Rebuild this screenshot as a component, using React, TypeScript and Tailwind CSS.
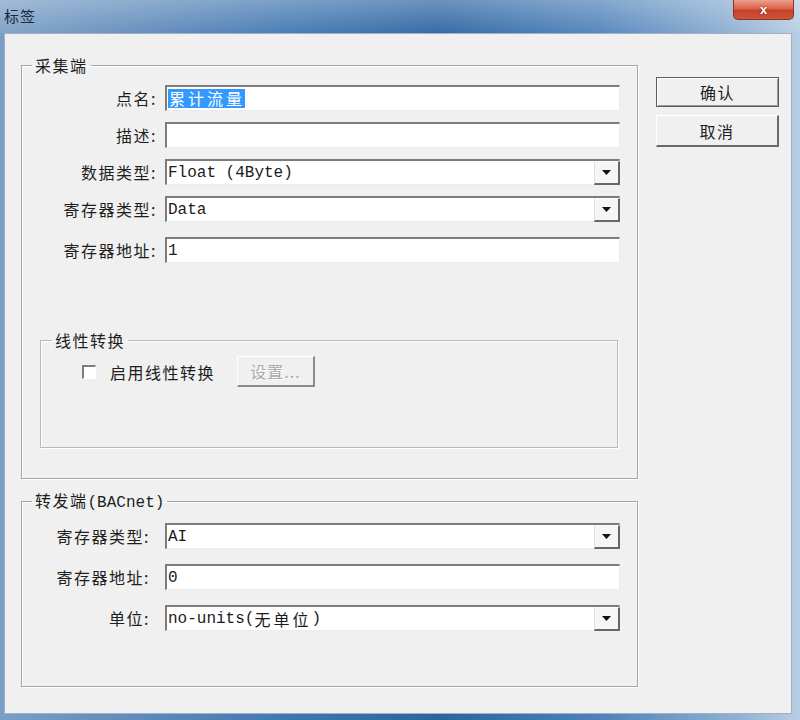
import React from "react";

const CJK = "font-['Noto_Sans_CJK_SC','Liberation_Sans',sans-serif]";
const MONO = "font-['Liberation_Mono','Noto_Sans_CJK_SC',monospace]";

function Arrow() {
  return (
    <svg width="9" height="5" viewBox="0 0 9 5">
      <polygon points="0,0 9,0 4.5,5" fill="#111" />
    </svg>
  );
}

function Field({ children, combo }: { children?: React.ReactNode; combo?: boolean }) {
  return (
    <div className="flex w-[455px] h-[26px] bg-white border-t-2 border-l-2 border-t-[#7c7c7c] border-l-[#7c7c7c] border-b border-b-[#ececec] border-r border-r-[#ececec]">
      <div className={`flex-1 flex items-center pl-[1px] text-[16px] leading-[20px] text-[#1b1b1b] whitespace-nowrap overflow-hidden ${MONO}`}>
        {children}
      </div>
      {combo && (
        <div className="w-[26px] h-[24px] -mb-[1px] -mr-[1px] bg-[#f6f6f6] border-t border-l border-t-white border-l-[#e0e0e0] border-b-2 border-r-2 border-b-[#676767] border-r-[#676767] flex items-center justify-center">
          <Arrow />
        </div>
      )}
    </div>
  );
}

function Row({ label, labelW, gap, children }: { label: string; labelW: string; gap: string; children: React.ReactNode }) {
  return (
    <div className="flex items-center">
      <div className={`${labelW} text-right text-[16px] leading-[20px] tracking-[1.5px] text-[#1e1e1e] ${CJK}`}>{label}</div>
      <div className={gap}>{children}</div>
    </div>
  );
}

export default function App() {
  return (
    <div className="w-[800px] h-[720px] flex flex-col overflow-hidden bg-[linear-gradient(90deg,#7a9fc6_0%,#6890bd_12%,#4278b1_35%,#2c63a1_55%,#4f82ba_75%,#8fb0d2_92%,#b7cde4_100%)]">
      {/* title bar */}
      <div className="h-[33px] flex items-start justify-between pl-[4px] pr-[6px] bg-[linear-gradient(180deg,rgba(255,255,255,0.3),rgba(255,255,255,0.06))]">
        <span className={`mt-[6px] text-[15px] leading-[20px] tracking-[1px] text-[#1a2a3a] ${CJK}`}>标签</span>
        <div className="w-[61px] h-[20px] rounded-b-[5px] border border-t-0 border-[#8a3424] bg-[linear-gradient(180deg,#eda08c_0%,#dc6449_45%,#c8402a_55%,#c9563c_100%)] flex items-center justify-center">
          <span className="text-white text-[13px] font-bold leading-none font-['Liberation_Sans',sans-serif] [text-shadow:0_0_2px_#6a1a0a]">x</span>
        </div>
      </div>

      {/* client area */}
      <div className="ml-[4px] mr-[8px] h-[681px] bg-[#f0f0f0] border border-[#9fb1c4] flex pl-[16px]">
        {/* left column */}
        <div className="w-[617px] flex flex-col pt-[23px]">
          {/* group 1 */}
          <fieldset className="h-[422px] border border-[#a5a5a5] shadow-[inset_1px_1px_0_#fff,1px_1px_0_#fff] pt-[12px]">
            <legend className={`ml-[10px] px-[3px] text-[16px] leading-[16px] tracking-[1.5px] text-[#1e1e1e] ${CJK}`}>采集端</legend>
            <div className="flex flex-col gap-[11px]">
              <Row label="点名:" labelW="w-[135px]" gap="ml-[8px]">
                <Field>
                  <span className={`bg-[#3399ff] text-white h-[19px] leading-[19px] tracking-[3px] pl-[1px] text-[16px] ${CJK}`}>累计流量</span>
                </Field>
              </Row>
              <Row label="描述:" labelW="w-[135px]" gap="ml-[8px]">
                <Field />
              </Row>
              <Row label="数据类型:" labelW="w-[135px]" gap="ml-[8px]">
                <Field combo>Float (4Byte)</Field>
              </Row>
              <Row label="寄存器类型:" labelW="w-[135px]" gap="ml-[8px]">
                <Field combo>Data</Field>
              </Row>
              <div className="mt-[4px]">
                <Row label="寄存器地址:" labelW="w-[135px]" gap="ml-[8px]">
                  <Field>1</Field>
                </Row>
              </div>
            </div>

            {/* group 2 */}
            <fieldset className="mt-[69px] ml-[18px] w-[578px] h-[116px] border border-[#b9b9b9] shadow-[inset_1px_1px_0_#fff,1px_1px_0_#fff] pt-[8px]">
              <legend className={`ml-[11px] px-[3px] text-[16px] leading-[16px] tracking-[1.5px] text-[#1e1e1e] ${CJK}`}>线性转换</legend>
              <div className="flex items-center pl-[41px]">
                <div className="w-[14px] h-[14px] bg-white border-t-2 border-l-2 border-t-[#7c7c7c] border-l-[#7c7c7c] border-b border-r border-b-white border-r-white" />
                <span className={`ml-[14px] text-[16px] leading-[20px] tracking-[1.5px] text-[#1e1e1e] ${CJK}`}>启用线性转换</span>
                <div className={`ml-[22px] w-[78px] h-[31px] bg-[#f0f0f0] border-t border-l border-t-white border-l-white border-b-2 border-r-2 border-b-[#8a8a8a] border-r-[#8a8a8a] flex items-center justify-center text-[16px] leading-[20px] tracking-[1px] text-[#a9a9a9] [text-shadow:1px_1px_0_#fff] ${CJK}`}>
                  设置...
                </div>
              </div>
            </fieldset>
          </fieldset>

          {/* group 3 */}
          <fieldset className="mt-[13px] h-[195px] border border-[#a5a5a5] shadow-[inset_1px_1px_0_#fff,1px_1px_0_#fff] pt-[12px]">
            <legend className={`ml-[10px] px-[3px] text-[16px] leading-[16px] text-[#1e1e1e] ${CJK}`}>
              <span className="tracking-[1.5px]">转发端</span>
              <span className={MONO}>(BACnet)</span>
            </legend>
            <div className="flex flex-col gap-[15px]">
              <Row label="寄存器类型:" labelW="w-[128px]" gap="ml-[15px]">
                <Field combo>AI</Field>
              </Row>
              <Row label="寄存器地址:" labelW="w-[128px]" gap="ml-[15px]">
                <Field>0</Field>
              </Row>
              <Row label="单位:" labelW="w-[128px]" gap="ml-[15px]">
                <Field combo>
                  no-units(<span className={`${CJK} tracking-[3px]`}>无单位</span>)
                </Field>
              </Row>
            </div>
          </fieldset>
        </div>

        {/* right column */}
        <div className="ml-[18px] w-[123px] flex flex-col gap-[8px] pt-[43px]">
          <div className={`h-[30px] bg-[#f0f0f0] border border-[#5c5c5c] shadow-[inset_1px_1px_0_#fff,inset_-1px_-1px_0_#9a9a9a] flex items-center justify-center text-[16px] leading-[20px] tracking-[1.5px] text-[#1e1e1e] ${CJK}`}>
            确认
          </div>
          <div className={`h-[32px] bg-[#f0f0f0] border-t border-l border-t-white border-l-white border-b-2 border-r-2 border-b-[#6a6a6a] border-r-[#6a6a6a] flex items-center justify-center text-[16px] leading-[20px] tracking-[1.5px] text-[#1e1e1e] ${CJK}`}>
            取消
          </div>
        </div>
      </div>
    </div>
  );
}
